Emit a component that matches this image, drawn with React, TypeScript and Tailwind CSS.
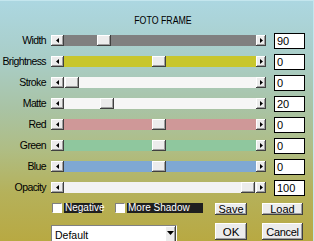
import React from "react";

const raised =
  "bg-[#ececec] shadow-[inset_-1px_-1px_0_#404040,inset_1px_1px_0_#ffffff,inset_-2px_-2px_0_#a0a0a0]";

type Row = { label: string; track: string; thumb: number; value: string; dotted?: boolean };

const rows: Row[] = [
  { label: "Width", track: "bg-[#808080]", thumb: 33, value: "90" },
  { label: "Brightness", track: "bg-[#c8c62c]", thumb: 88, value: "0" },
  { label: "Stroke", track: "bg-[#f6f6f6]", thumb: 1, value: "0", dotted: true },
  { label: "Matte", track: "bg-[#f6f6f6]", thumb: 36, value: "20", dotted: true },
  { label: "Red", track: "bg-[#cf9898]", thumb: 88, value: "0" },
  { label: "Green", track: "bg-[#8fc79e]", thumb: 88, value: "0" },
  { label: "Blue", track: "bg-[#7fa8d3]", thumb: 88, value: "0" },
  { label: "Opacity", track: "bg-[#f2f2f2]", thumb: 177, value: "100", dotted: true },
];

function Arrow({ dir }: { dir: "left" | "right" | "down" }) {
  if (dir === "down")
    return (
      <svg width="7" height="4" viewBox="0 0 7 4">
        <path d="M0 0h7L3.5 4z" fill="#000" />
      </svg>
    );
  return (
    <svg width="3" height="5" viewBox="0 0 3 5">
      {dir === "left" ? <path d="M3 0v5L0 2.5z" fill="#000" /> : <path d="M0 0v5l3-2.5z" fill="#000" />}
    </svg>
  );
}

function Slider({ track, thumb, dotted }: { track: string; thumb: number; dotted?: boolean }) {
  return (
    <div className="flex h-[11px] w-[215px]">
      <div className={`${raised} flex h-[11px] w-[13px] items-center justify-center`}>
        <Arrow dir="left" />
      </div>
      <div
        className={`relative h-[11px] flex-1 ${track} ${
          dotted ? "bg-[radial-gradient(#e2e2e2_0.5px,transparent_0.6px)] bg-[length:2px_2px]" : ""
        }`}
      >
        <div className={`${raised} absolute top-0 h-[11px] w-[14px]`} style={{ left: thumb }} />
      </div>
      <div className={`${raised} flex h-[11px] w-[10px] items-center justify-center`}>
        <Arrow dir="right" />
      </div>
    </div>
  );
}

export default function App() {
  return (
    <div
      className="relative h-[241px] w-[314px] overflow-hidden border-t border-r border-[#c4e6ee] bg-[linear-gradient(180deg,#acd7e1_0%,#a9cdc6_25%,#a9c3a4_45%,#afbd84_62%,#b5b15a_80%,#b8a942_100%)] text-black"
      style={{ fontFamily: '"Liberation Sans", Arial, sans-serif' }}
    >
      <div className="flex h-[29px] justify-center pl-[12px] pt-[13px]">
        <span className="block scale-x-[0.8] text-[11px] leading-[12px]">FOTO FRAME</span>
      </div>

      <div className="flex flex-col">
        {rows.map((r) => (
          <div key={r.label} className="flex h-[21px] items-center">
            <div className="w-[46px] text-right text-[10.5px] leading-[11px] tracking-[-0.6px]">{r.label}</div>
            <div className="ml-[5px]">
              <Slider track={r.track} thumb={r.thumb} dotted={r.dotted} />
            </div>
            <div className="ml-[8px] flex h-[16px] w-[31px] items-center border border-black bg-white pl-[2px] text-[11px] leading-[12px]">
              {r.value}
            </div>
          </div>
        ))}
      </div>

      <div className="mt-[5px] flex h-[12px] items-start pl-[52px]">
        <div className="h-[10px] w-[10px] border border-t-[#808080] border-l-[#808080] border-b-white border-r-white bg-white" />
        <div className="ml-[2px] flex h-[10px] w-[38px] items-center bg-[#1f1f1f] pl-[1px] text-[10px] leading-[10px] text-white">
          Negative
        </div>
        <div className="ml-[13px] h-[10px] w-[10px] border border-t-[#808080] border-l-[#808080] border-b-white border-r-white bg-white" />
        <div className="ml-[2px] flex h-[10px] w-[76px] items-center bg-[#1f1f1f] pl-[1px] text-[10px] leading-[10px] text-white">
          More Shadow
        </div>
        <div className={`${raised} ml-[12px] flex h-[12px] w-[32px] items-center justify-center text-[11px] leading-[10px]`}>
          Save
        </div>
        <div className={`${raised} ml-[15px] flex h-[12px] w-[41px] items-center justify-center text-[11px] leading-[10px]`}>
          Load
        </div>
      </div>

      <div className="mt-[8px] flex items-start pl-[51px]">
        <div className="mt-[2px] flex h-[20px] w-[126px] border border-t-[#808080] border-l-[#808080] border-b-white border-r-white bg-white">
          <div className="flex flex-1 items-center pl-[3px] text-[10.5px] leading-[11px]">Default</div>
          <div className={`${raised} flex h-full w-[11px] items-start justify-center pt-[5px]`}>
            <Arrow dir="down" />
          </div>
        </div>
        <div className={`${raised} ml-[38px] flex h-[17px] w-[32px] items-center justify-center text-[11.5px] leading-[12px]`}>
          OK
        </div>
        <div className={`${raised} ml-[15px] flex h-[17px] w-[41px] items-center justify-center text-[11px] leading-[12px] tracking-[-0.3px]`}>
          Cancel
        </div>
      </div>
    </div>
  );
}
